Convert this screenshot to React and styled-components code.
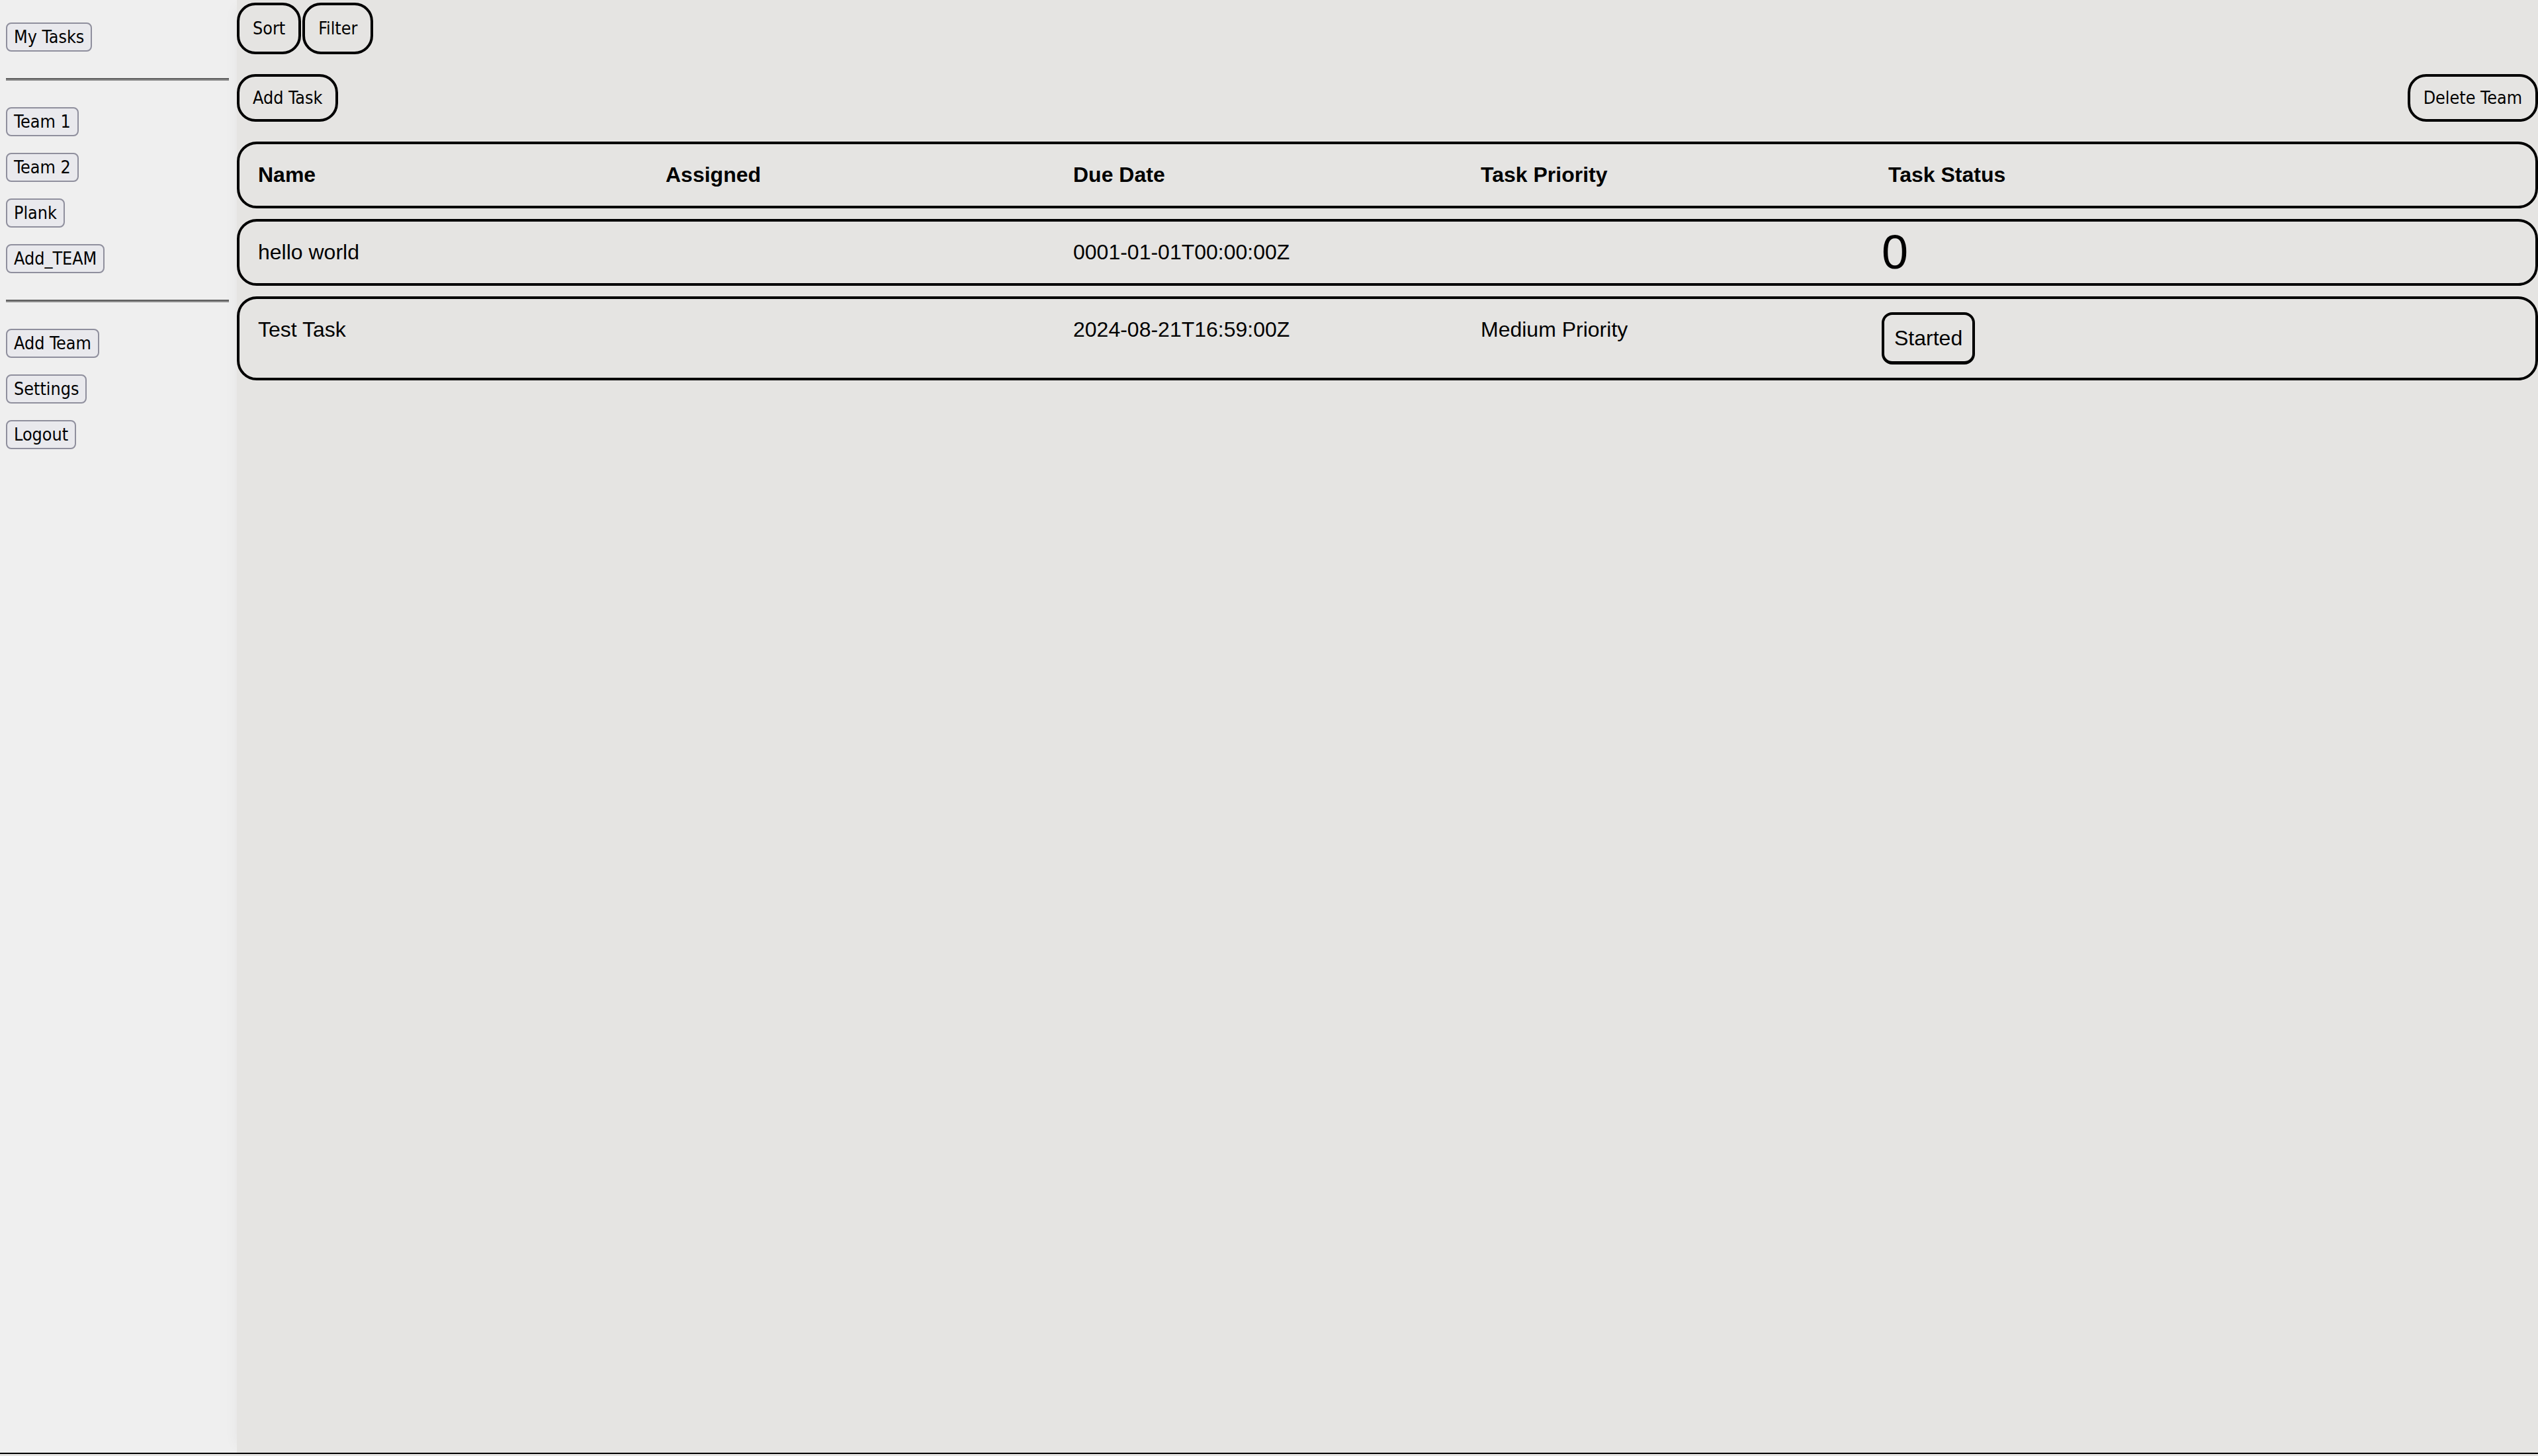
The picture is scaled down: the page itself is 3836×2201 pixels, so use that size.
import React from "react";
import styled, { createGlobalStyle } from "styled-components";

const GlobalStyle = createGlobalStyle`
  html, body {
    margin: 0;
    padding: 0;
    background: #e5e4e2;
  }
  body {
    font-family: "Liberation Sans", Arial, sans-serif;
    color: #000;
  }
  * { box-sizing: border-box; }
`;

const Page = styled.div`
  zoom: 2;
  display: flex;
  min-height: 1099px;
  border-bottom: 1px solid #000;
  font-family: "Liberation Sans", Arial, sans-serif;
`;

const Sidebar = styled.nav`
  width: 179px;
  flex-shrink: 0;
  background: #efefef;
  padding: 17px 6px 0 4.5px;
  display: flex;
  flex-direction: column;
  align-items: flex-start;
`;

const NavGroup = styled.div`
  display: flex;
  flex-direction: column;
  align-items: flex-start;
  gap: 12.5px;
`;

const Divider = styled.hr`
  align-self: stretch;
  margin: 20px 0;
  height: 0;
  border: 0;
  border-top: 1px solid #5f5f5f;
  border-bottom: 1px solid #8e8e8e;
`;

const NavButton = styled.button`
  font-family: "DejaVu Sans Condensed", "DejaVu Sans", Tahoma, sans-serif;
  font-size: 13.33px;
  line-height: 16px;
  padding: 2px 5px;
  border: 1px solid #8f8f9d;
  border-radius: 4px;
  background: #e9e9ed;
  color: #000;
  cursor: pointer;
  white-space: nowrap;
`;

const Main = styled.main`
  flex: 1;
  min-width: 0;
  background: #e5e4e2;
  padding-top: 2px;
  display: flex;
  flex-direction: column;
  gap: 15px;
  box-shadow: -6px 0 10px -6px rgba(0, 0, 0, 0.05);
`;

const Toolbar = styled.div`
  display: flex;
  gap: 1px;
`;

const ActionRow = styled.div`
  display: flex;
  justify-content: space-between;
  align-items: center;
`;

const PillButton = styled.button`
  font-family: "DejaVu Sans Condensed", "DejaVu Sans", Tahoma, sans-serif;
  font-size: 13.33px;
  line-height: 16px;
  padding: ${(p) => (p.$tall ? "9.5px 10px" : "8px 10px")};
  border: 2px solid #000;
  border-radius: 14px;
  background: transparent;
  color: #000;
  cursor: pointer;
  white-space: nowrap;
`;

const TaskList = styled.div`
  display: flex;
  flex-direction: column;
  gap: 8px;
`;

const RowCard = styled.div`
  display: grid;
  grid-template-columns: repeat(5, 308px);
  align-items: start;
  padding: 10px 14px;
  border: 2px solid #000;
  border-radius: 15px;
  font-family: "Liberation Sans", Arial, sans-serif;
  font-size: 16px;
  line-height: 26.4px;
  font-weight: ${(p) => (p.$header ? 700 : 400)};
`;

const Cell = styled.div`
  min-width: 0;
  white-space: nowrap;
`;

const StatusCell = styled(Cell)`
  margin-left: -5px;
`;

const ZeroMark = styled.div`
  font-size: 36px;
  line-height: 26.4px;
  height: 26.4px;
`;

const StatusButton = styled.button`
  display: block;
  font-family: "Liberation Sans", Arial, sans-serif;
  font-size: 16px;
  line-height: 18.4px;
  padding: 8.5px 7.5px;
  border: 2px solid #000;
  border-bottom-width: 2.5px;
  border-radius: 8px;
  background: transparent;
  color: #000;
  cursor: pointer;
`;

const teams = ["Team 1", "Team 2", "Plank", "Add_TEAM"];
const columns = ["Name", "Assigned", "Due Date", "Task Priority", "Task Status"];
const tasks = [
  { name: "hello world", assigned: "", due: "0001-01-01T00:00:00Z", priority: "", status: null },
  { name: "Test Task", assigned: "", due: "2024-08-21T16:59:00Z", priority: "Medium Priority", status: "Started" },
];

export default function App() {
  return (
    <>
      <GlobalStyle />
      <Page>
        <Sidebar>
          <NavGroup>
            <NavButton>My Tasks</NavButton>
          </NavGroup>
          <Divider />
          <NavGroup>
            {teams.map((t) => (
              <NavButton key={t}>{t}</NavButton>
            ))}
          </NavGroup>
          <Divider />
          <NavGroup>
            <NavButton>Add Team</NavButton>
            <NavButton>Settings</NavButton>
            <NavButton>Logout</NavButton>
          </NavGroup>
        </Sidebar>
        <Main>
          <Toolbar>
            <PillButton $tall>Sort</PillButton>
            <PillButton $tall>Filter</PillButton>
          </Toolbar>
          <ActionRow>
            <PillButton>Add Task</PillButton>
            <PillButton>Delete Team</PillButton>
          </ActionRow>
          <TaskList>
            <RowCard $header>
              {columns.map((c) => (
                <Cell key={c}>{c}</Cell>
              ))}
            </RowCard>
            {tasks.map((t) => (
              <RowCard key={t.name}>
                <Cell>{t.name}</Cell>
                <Cell>{t.assigned}</Cell>
                <Cell>{t.due}</Cell>
                <Cell>{t.priority}</Cell>
                <StatusCell>
                  {t.status ? (
                    <StatusButton>{t.status}</StatusButton>
                  ) : (
                    <ZeroMark>0</ZeroMark>
                  )}
                </StatusCell>
              </RowCard>
            ))}
          </TaskList>
        </Main>
      </Page>
    </>
  );
}
